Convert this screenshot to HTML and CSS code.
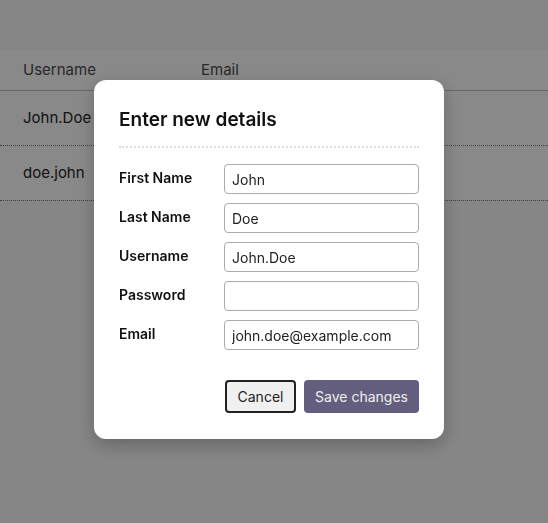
FILE: index.html
```html
<!DOCTYPE html>
<html>
<head>
<meta charset="utf-8">
<link rel="stylesheet" href="styles.css">
</head>
<body>
<div class="page">
  <table class="users">
    <thead>
      <tr><th class="col-user">Username</th><th>Email</th></tr>
    </thead>
    <tbody>
      <tr><td>John.Doe</td><td></td></tr>
      <tr><td>doe.john</td><td></td></tr>
    </tbody>
  </table>
</div>
<div class="overlay">
  <div class="modal">
    <h2 class="modal-title">Enter new details</h2>
    <form class="form">
      <label class="label" for="fn">First Name</label><input class="input" id="fn" value="John">
      <label class="label" for="ln">Last Name</label><input class="input" id="ln" value="Doe">
      <label class="label" for="un">Username</label><input class="input" id="un" value="John.Doe">
      <label class="label" for="pw">Password</label><input class="input" id="pw" type="password" value="">
      <label class="label" for="em">Email</label><input class="input" id="em" value="john.doe@example.com">
    </form>
    <div class="actions">
      <button class="btn btn-cancel">Cancel</button>
      <button class="btn btn-save">Save changes</button>
    </div>
  </div>
</div>
</body>
</html>
```
FILE: styles.css
```css
* { box-sizing: border-box; }
html, body { margin: 0; padding: 0; }
body {
  font-family: Inter, "Noto Sans", sans-serif;
  background: #f6f6f6;
  color: #222;
  width: 548px;
  height: 523px;
  overflow: hidden;
}
.page { padding-top: 50px; }
.users {
  width: 100%;
  border-collapse: collapse;
  font-size: 15px;
}
.users thead tr { background: #fcfcfc; }
.users th {
  text-align: left;
  font-weight: 400;
  color: #4a4a4a;
  height: 40px;
  padding: 0 0 0 23px;
  border-bottom: 1px solid #bdbdbd;
}
.users th.col-user, .users td:first-child { width: 178px; }
.users td {
  height: 55px;
  padding: 0 0 0 23px;
  border-bottom: 1px dotted #777;
  background: #fcfcfc;
}
.overlay {
  position: fixed;
  inset: 0;
  background: rgba(0, 0, 0, 0.455);
  padding: 80px 0 0 94px;
}
.modal {
  width: 350px;
  height: 359px;
  background: #fff;
  border-radius: 12px;
  box-shadow: 0 6px 18px rgba(0, 0, 0, 0.25);
  padding: 26px 25px 26px 25px;
  display: flex;
  flex-direction: column;
}
.modal-title {
  margin: 0;
  font-size: 19px;
  font-weight: 600;
  color: #111;
  line-height: 28px;
  padding-bottom: 12px;
  border-bottom: 2px dotted #ddd;
}
.form {
  margin-top: 16px;
  display: grid;
  grid-template-columns: 105px 195px;
  row-gap: 9px;
  align-items: center;
}
.label {
  font-size: 14px;
  font-weight: 600;
  color: #111;
  padding-bottom: 3px;
}
.input {
  height: 30px;
  width: 195px;
  border: 1px solid #aaa;
  border-radius: 4px;
  padding: 0 7px;
  font-family: inherit;
  font-size: 14px;
  color: #222;
  background: #fff;
}
.actions {
  margin-top: 30px;
  display: flex;
  justify-content: flex-end;
  gap: 8px;
}
.btn {
  height: 33px;
  border-radius: 4px;
  font-family: inherit;
  font-size: 14px;
  padding: 0 10px;
}
.btn-cancel {
  width: 71px;
  background: #f0f0f0;
  border: 2px solid #222;
  color: #222;
}
.btn-save {
  width: 115px;
  background: #645e7e;
  border: none;
  color: #eee;
}
```
